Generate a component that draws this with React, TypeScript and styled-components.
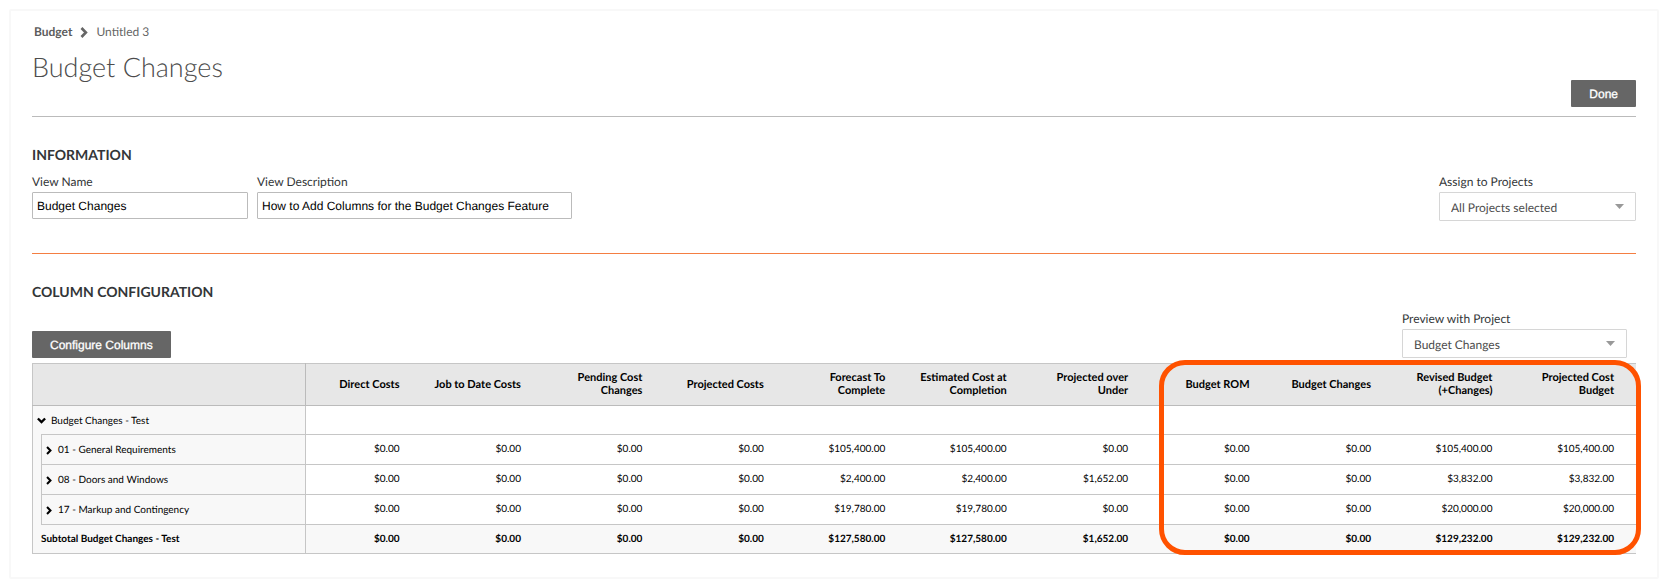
import React from "react";
import styled, { createGlobalStyle } from "styled-components";

const GlobalStyle = createGlobalStyle`
  *, *::before, *::after { box-sizing: border-box; }
  body {
    margin: 0;
    background: #fff;
    color: #333638;
    font-family: Lato, "Open Sans", sans-serif;
    font-size: 12px;
    line-height: 16px;
    text-rendering: geometricPrecision;
  }
  button, input, select { text-rendering: inherit; }
`;

const Page = styled.div`
  padding: 9px;
`;

const Card = styled.main`
  border: 2px solid #f8f8f8;
  border-radius: 2px;
  padding: 12px 21px 23px;
`;

const Breadcrumb = styled.nav`
  display: flex;
  align-items: center;
  gap: 8px;
  height: 18px;
  padding-left: 2px;
  color: #666;
`;

const CrumbLink = styled.a`
  color: #5c5c5c;
  font-weight: 700;
  text-decoration: none;
`;

const TitleBar = styled.header`
  display: flex;
  justify-content: space-between;
  align-items: flex-end;
  padding: 8px 0 9px;
  height: 76px;
  border-bottom: 1px solid #bbb;
`;

const Title = styled.h1`
  align-self: flex-start;
  margin: 0;
  color: #4c4c4c;
  font-size: 27px;
  font-weight: 300;
  line-height: 36px;
`;

const Button = styled.button`
  height: 27px;
  padding: 0 18px;
  border: 0;
  border-radius: 1px;
  background: #666;
  color: #fff;
  font-family: "Liberation Sans", Arial, sans-serif;
  font-size: 12px;
  -webkit-text-stroke: 0.3px #fff;
`;

const Section = styled.section<{ $ruled?: boolean }>`
  padding-top: 28px;
  ${(p) => p.$ruled && "padding-bottom: 32px; border-bottom: 1px solid #f47e42;"}
`;

const SectionTitle = styled.h2`
  margin: 0;
  font-size: 14px;
  font-weight: 700;
  line-height: 20px;
  text-transform: uppercase;
`;

const FieldRow = styled.div`
  display: flex;
  align-items: flex-start;
  gap: 9px;
  padding-top: 9px;
`;

const Toolbar = styled.div`
  display: flex;
  justify-content: space-between;
  align-items: flex-end;
  padding: 9px 9px 5px 0;
`;

const Field = styled.div<{ $width: number; $end?: boolean }>`
  display: flex;
  flex-direction: column;
  gap: 2px;
  width: ${(p) => p.$width}px;
  ${(p) => p.$end && "margin-left: auto;"}
`;

const TextInput = styled.input`
  width: 100%;
  height: 27px;
  padding: 0 4px;
  border: 1px solid #bbb;
  border-radius: 1px;
  background: #fff;
  color: #000;
  font-family: "Liberation Sans", Arial, sans-serif;
  font-size: 12px;
`;

const SelectBox = styled.div`
  position: relative;

  svg {
    position: absolute;
    top: 12px;
    right: 12px;
    pointer-events: none;
  }
`;

const Select = styled.select`
  appearance: none;
  display: block;
  width: 100%;
  height: 29px;
  padding: 1px 30px 0 11px;
  border: 1px solid #d6d6d6;
  border-radius: 1px;
  background: #fff;
  color: #4c4c4c;
  font-family: inherit;
  font-size: 12px;
`;

const TableWrap = styled.div`
  position: relative;
`;

const Table = styled.table`
  width: 100%;
  table-layout: fixed;
  border-collapse: collapse;
  border: 1px solid #c6c6c6;
  border-right: 0;
  color: #000;
  font-size: 10px;
  line-height: 12px;
`;

const Row = styled.tr<{ $height: number; $total?: boolean }>`
  height: ${(p) => p.$height}px;
  ${(p) => p.$total && "background: #f8f8f8; font-weight: 700;"}
`;

const HeadCell = styled.th`
  padding: 0 22px 1px 0;
  border-bottom: 1px solid #bbb;
  background: #e7e7e7;
  font-size: 11px;
  font-weight: 700;
  line-height: 13px;
  text-align: right;
`;

const CornerCell = styled.td`
  border-right: 1px solid #bbb;
  border-bottom: 1px solid #bbb;
  background: #e7e7e7;
`;

const LabelCell = styled.th<{ $nested?: boolean; $total?: boolean }>`
  padding: ${(p) => (p.$total ? "0 8px" : "1px 4px 0")};
  border-right: 1px solid #c6c6c6;
  ${(p) => p.$nested && "border: 1px solid #c6c6c6;"}
  background: #f8f8f8;
  font-weight: ${(p) => (p.$total ? 700 : 400)};
  text-align: left;
`;

const IndentCell = styled.td`
  padding: 0;
  background: #f8f8f8;
`;

const ValueCell = styled.td`
  padding: 0 22px 1px 0;
  border-top: 1px solid #c6c6c6;
  border-bottom: 1px solid #c6c6c6;
  text-align: right;
`;

const Toggle = styled.button<{ $gap: number }>`
  display: flex;
  align-items: center;
  gap: ${(p) => p.$gap}px;
  padding: 0;
  border: 0;
  background: none;
  color: inherit;
  font: inherit;
`;

const Highlight = styled.div`
  position: absolute;
  top: -3px;
  right: -5px;
  bottom: -1px;
  width: calc((100% - 389px) * 4 / 10 - 4px);
  border: 5px solid #ff5200;
  border-radius: 26px;
  pointer-events: none;
`;

const Chevron = ({ down, large }: { down?: boolean; large?: boolean }) => (
  <svg
    width={down ? 9 : large ? 8 : 6}
    height={down ? 7 : large ? 11 : 9}
    viewBox={down ? "0 0 9 7" : "0 0 7 10"}
    aria-hidden="true"
  >
    <path
      d={down ? "M0.9 1.5 4.5 5 8.1 1.5" : "M1.2 0.9 5.2 5 1.2 9.1"}
      fill="none"
      stroke="currentColor"
      strokeWidth="2.4"
    />
  </svg>
);

const Caret = () => (
  <svg width="9" height="5" viewBox="0 0 9 5" aria-hidden="true">
    <path d="M0 0h9L4.5 5z" fill="#999" />
  </svg>
);

const columns = [
  "Direct Costs",
  "Job to Date Costs",
  "Pending Cost Changes",
  "Projected Costs",
  "Forecast To Complete",
  "Estimated Cost at Completion",
  "Projected over Under",
  "Budget ROM",
  "Budget Changes",
  "Revised Budget (+Changes)",
  "Projected Cost Budget",
];

const zero = "$0.00";

const divisions = [
  {
    name: "01 - General Requirements",
    values: [zero, zero, zero, zero, "$105,400.00", "$105,400.00", zero, zero, zero, "$105,400.00", "$105,400.00"],
  },
  {
    name: "08 - Doors and Windows",
    values: [zero, zero, zero, zero, "$2,400.00", "$2,400.00", "$1,652.00", zero, zero, "$3,832.00", "$3,832.00"],
  },
  {
    name: "17 - Markup and Contingency",
    values: [zero, zero, zero, zero, "$19,780.00", "$19,780.00", zero, zero, zero, "$20,000.00", "$20,000.00"],
  },
];

const subtotal = [zero, zero, zero, zero, "$127,580.00", "$127,580.00", "$1,652.00", zero, zero, "$129,232.00", "$129,232.00"];

const BudgetTable = () => (
  <TableWrap>
    <Table>
      <colgroup>
        <col style={{ width: 9 }} />
        <col style={{ width: 264 }} />
        <col style={{ width: 116 }} />
        {columns.slice(1).map((c) => (
          <col key={c} />
        ))}
      </colgroup>
      <thead>
        <Row $height={42}>
          <CornerCell colSpan={2} />
          {columns.map((c) => (
            <HeadCell key={c} scope="col">{c}</HeadCell>
          ))}
        </Row>
      </thead>
      <tbody>
        <Row $height={29}>
          <LabelCell colSpan={2} scope="row">
            <Toggle type="button" aria-expanded="true" $gap={5}>
              <Chevron down />
              Budget Changes - Test
            </Toggle>
          </LabelCell>
          {columns.map((c) => (
            <ValueCell key={c} />
          ))}
        </Row>
        {divisions.map((d, i) => (
          <Row key={d.name} $height={30}>
            {i === 0 && <IndentCell rowSpan={divisions.length} />}
            <LabelCell $nested scope="row">
              <Toggle type="button" aria-expanded="false" $gap={6}>
                <Chevron />
                {d.name}
              </Toggle>
            </LabelCell>
            {d.values.map((v, n) => (
              <ValueCell key={columns[n]}>{v}</ValueCell>
            ))}
          </Row>
        ))}
      </tbody>
      <tfoot>
        <Row $height={29} $total>
          <LabelCell colSpan={2} $total scope="row">Subtotal Budget Changes - Test</LabelCell>
          {subtotal.map((v, n) => (
            <ValueCell key={columns[n]}>{v}</ValueCell>
          ))}
        </Row>
      </tfoot>
    </Table>
    <Highlight />
  </TableWrap>
);

export default function App() {
  return (
    <Page>
      <GlobalStyle />
      <Card>
        <Breadcrumb aria-label="Breadcrumb">
          <CrumbLink href="#budget">Budget</CrumbLink>
          <Chevron large />
          <span>Untitled 3</span>
        </Breadcrumb>
        <TitleBar>
          <Title>Budget Changes</Title>
          <Button type="button">Done</Button>
        </TitleBar>

        <Section $ruled>
          <SectionTitle>Information</SectionTitle>
          <FieldRow>
            <Field $width={216}>
              <label htmlFor="view-name">View Name</label>
              <TextInput id="view-name" defaultValue="Budget Changes" />
            </Field>
            <Field $width={315}>
              <label htmlFor="view-description">View Description</label>
              <TextInput id="view-description" defaultValue="How to Add Columns for the Budget Changes Feature" />
            </Field>
            <Field $width={197} $end>
              <label htmlFor="assign-projects">Assign to Projects</label>
              <SelectBox>
                <Select id="assign-projects">
                  <option>All Projects selected</option>
                </Select>
                <Caret />
              </SelectBox>
            </Field>
          </FieldRow>
        </Section>

        <Section>
          <SectionTitle>Column Configuration</SectionTitle>
          <Toolbar>
            <Button type="button">Configure Columns</Button>
            <Field $width={225}>
              <label htmlFor="preview-project">Preview with Project</label>
              <SelectBox>
                <Select id="preview-project">
                  <option>Budget Changes</option>
                </Select>
                <Caret />
              </SelectBox>
            </Field>
          </Toolbar>
          <BudgetTable />
        </Section>
      </Card>
    </Page>
  );
}
